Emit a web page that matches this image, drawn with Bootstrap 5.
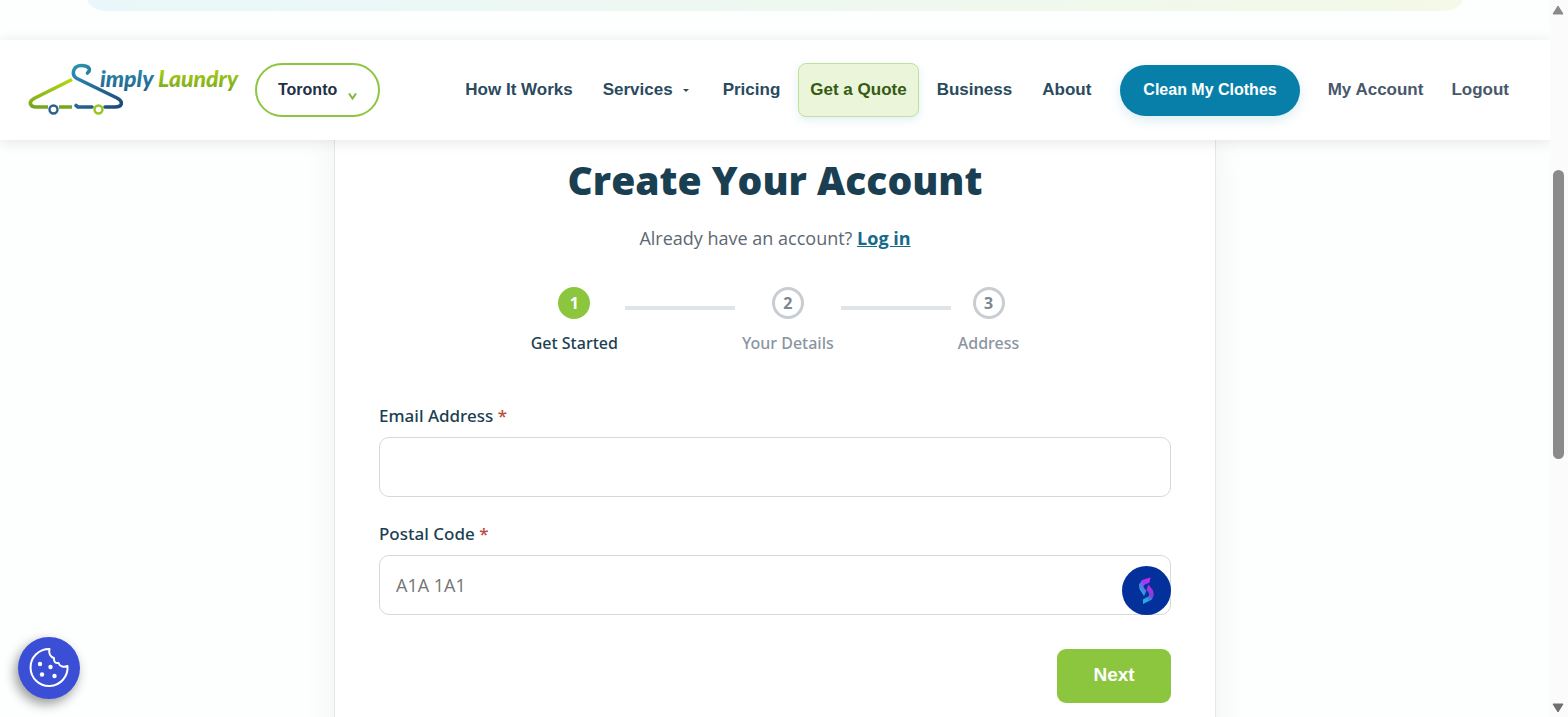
<!DOCTYPE html>
<html lang="en">
<head>
<meta charset="utf-8">
<meta name="viewport" content="width=device-width, initial-scale=1">
<title>Create Your Account - Simply Laundry</title>
<link href="https://cdn.jsdelivr.net/npm/bootstrap@5.3.0/dist/css/bootstrap.min.css" rel="stylesheet">
<style>
  body { background: #fdfefe; color: #1b3f52; font-family: "Open Sans", "Noto Sans", sans-serif; height: 100vh; overflow: hidden; }
  .page-area { min-width: 0; overflow: hidden; }
  .hero-foot { height: 11px; margin: 0 88px 29px; border-radius: 0 0 20px 20px / 0 0 11px 11px; background: linear-gradient(90deg, #e9f7fa, #f4f9e8); }

  .site-header { min-height: 100px; padding: 0 41px 0 28px; background: #fff; box-shadow: 0 2px 14px rgba(0, 0, 0, .1); z-index: 2; font-family: "Liberation Sans", Arial, sans-serif; font-size: 17px; font-weight: 700; }
  .brand-art { width: 212px; height: 56px; display: block; }
  .brand-word { font: italic 900 23px "Lato", sans-serif; }
  .city-btn { height: 54px; padding: 0 21px 0 21px; margin-left: 15px; border: 2px solid #8cc63f; border-radius: 27px; background: #fff; color: #1f2f46; font-size: 16px; font-weight: 700; }
  .city-btn svg { margin: 12px 0 0 11px; }
  .menu { gap: 6px; }
  .menu a, .account-link { color: #2a4a5e; text-decoration: none; white-space: nowrap; }
  .menu a { display: flex; align-items: center; height: 54px; padding: 0 11px; border: 1px solid transparent; border-radius: 8px; }
  .menu a.quote { background: #eaf5da; border-color: #c3e09a; color: #365a12; box-shadow: 0 3px 10px rgba(8, 127, 168, .12); }
  .menu .arrow { border: 3px solid transparent; border-top-color: currentColor; border-bottom: 0; margin-left: 10px; }
  .menu-end { gap: 28px; margin-left: 17px; }
  .account-link { color: #48586a; }
  .cta { height: 51px; padding: 0 23px; border: 0; border-radius: 26px; background: #087fa8; color: #fff; font-size: 16px; font-weight: 700; white-space: nowrap; box-shadow: 0 4px 12px rgba(8, 127, 168, .15); }

  .signup { max-width: 882px; padding: 16px 44px 0; background: #fff; border: solid #e3e8ea; border-width: 0 1px; box-shadow: 0 0 32px rgba(20, 60, 70, .06); }
  .signup h1 { font: 800 39px/48px "Open Sans", sans-serif; color: #1b3f52; margin: 0 0 21px; }
  .login-line { font-size: 18px; line-height: 26px; color: #5d6873; margin-bottom: 36px; }
  .login-line a { color: #17698a; font-weight: 700; }
  .steps { gap: 7px; margin: 0 0 48px; padding: 0; list-style: none; font-family: "Noto Sans", sans-serif; font-size: 16px; line-height: 24px; font-weight: 500; color: #8b959f; }
  .steps .dot { width: 32px; height: 32px; border: 3px solid #c8cdd2; border-radius: 50%; font-weight: 700; color: #7c8791; margin-bottom: 12px; }
  .steps .current { color: #1b3f52; }
  .steps .current .dot { background: #8cc63f; border-color: #8cc63f; color: #fff; }
  .steps .bar { width: 110px; height: 4px; margin-top: 19px; background: #dfe4e8; }
  .signup label { display: block; font-family: "Noto Sans", sans-serif; font-size: 17px; line-height: 26px; font-weight: 500; margin-bottom: 8px; }
  .signup label span { color: #c0483c; }
  .signup .form-control { height: 60px; padding: 0 16px; border: 1px solid #d5d9dc; border-radius: 10px; font-size: 18px; }
  .signup .form-control::placeholder { color: #757575; font-weight: 400; }
  .field { margin-bottom: 24px; }
  .helper { right: 0; bottom: 0; width: 49px; height: 49px; }
  .next-btn { width: 114px; height: 54px; padding: 0 0 3px; border: 0; border-radius: 9px; background: #8cc63f; color: #fff; font: 700 19px "Liberation Sans", Arial, sans-serif; margin-top: 10px; }
  .cookie-btn { left: 18px; bottom: 18px; width: 62px; height: 62px; border-radius: 50%; background: #3b4fd6; box-shadow: -3px 5px 12px rgba(0, 0, 0, .4); }

  .scroll-rail { width: 18px; background: #fbfbfb; padding: 5px 2px 4px 0; }
  .scroll-rail .thumb { width: 11px; height: 289px; border-radius: 6px; background: #8a8a8a; margin-top: 155px; }
</style>
</head>
<body class="d-flex">
<div class="page-area flex-grow-1">
  <div class="hero-foot"></div>

  <header class="site-header position-relative d-flex align-items-center">
    <a href="#" aria-label="Simply Laundry">
      <svg class="brand-art" viewBox="28 62 212 56" fill="none">
        <defs>
          <linearGradient id="lime" x1="0" y1="0" x2="0" y2="1"><stop offset="0" stop-color="#b4d90e"/><stop offset="1" stop-color="#75a521"/></linearGradient>
          <linearGradient id="sea" gradientUnits="userSpaceOnUse" x1="80" y1="64" x2="112" y2="110"><stop offset="0" stop-color="#2b8fb0"/><stop offset="1" stop-color="#1f4a80"/></linearGradient>
          <linearGradient id="seaWord" x1="0" y1="0" x2="0" y2="1"><stop offset="0" stop-color="#2a93b5"/><stop offset="1" stop-color="#23608b"/></linearGradient>
        </defs>
        <path d="M72 79.500 L34 98.500 C28 102 30 107 36 107 H48 M59 107 H72" stroke="url(#lime)" stroke-width="3.600"/>
        <path d="M87.500 73 C92 69 88 65.500 81.500 65.500 C72.500 65.500 71 75 77 78.500 L117 98 C124 102 122 107 115 107 H105 M92 107 H78 M78 107 L76 105.500" stroke="url(#sea)" stroke-width="3.600" stroke-linecap="round"/>
        <circle cx="53.500" cy="109.500" r="4" stroke="#2b5f91" stroke-width="2.400"/>
        <circle cx="98.500" cy="109.500" r="4" stroke="#98c51f" stroke-width="2.400"/>
        <text class="brand-word" x="100" y="87" fill="url(#seaWord)">imply</text>
        <text class="brand-word" x="158" y="87" fill="url(#lime)">Laundry</text>
      </svg>
    </a>
    <button type="button" class="city-btn d-flex align-items-center">Toronto
      <svg width="9" height="7" viewBox="0 0 9 7" fill="none" stroke="#7fb93a" stroke-width="2"><path d="M1 .500l3.500 5L8 .500"/></svg>
    </button>
    <nav class="d-flex align-items-center ms-auto">
      <ul class="menu list-unstyled d-flex align-items-center m-0">
        <li><a href="#">How It Works</a></li>
        <li><a href="#">Services<span class="arrow"></span></a></li>
        <li class="ms-1"><a href="#">Pricing</a></li>
        <li><a href="#" class="quote">Get a Quote</a></li>
        <li><a href="#">Business</a></li>
        <li><a href="#">About</a></li>
      </ul>
      <div class="menu-end d-flex align-items-center">
        <button type="button" class="cta">Clean My Clothes</button>
        <a href="#" class="account-link">My Account</a>
        <a href="#" class="account-link">Logout</a>
      </div>
    </nav>
  </header>

  <main class="signup mx-auto vh-100">
    <h1 class="text-center">Create Your Account</h1>
    <p class="login-line text-center">Already have an account? <a href="#">Log in</a></p>

    <ol class="steps d-flex justify-content-center">
      <li class="current d-flex flex-column align-items-center"><span class="dot d-flex align-items-center justify-content-center">1</span>Get Started</li>
      <li class="bar" aria-hidden="true"></li>
      <li class="d-flex flex-column align-items-center"><span class="dot d-flex align-items-center justify-content-center">2</span>Your Details</li>
      <li class="bar" aria-hidden="true"></li>
      <li class="d-flex flex-column align-items-center"><span class="dot d-flex align-items-center justify-content-center">3</span>Address</li>
    </ol>

    <form>
      <div class="field">
        <label for="email">Email Address <span>*</span></label>
        <input type="email" id="email" class="form-control">
      </div>
      <div class="field position-relative">
        <label for="postal">Postal Code <span>*</span></label>
        <input type="text" id="postal" class="form-control" placeholder="A1A 1A1">
        <svg class="helper position-absolute" viewBox="0 0 49 49" aria-hidden="true">
          <defs>
            <linearGradient id="pk" x1="1" y1="0" x2="0" y2="1"><stop offset="0" stop-color="#e020e8"/><stop offset=".45" stop-color="#9a3df0"/><stop offset=".8" stop-color="#18b4dc"/></linearGradient>
            <linearGradient id="cy" x1=".8" y1="0" x2=".2" y2="1"><stop offset="0" stop-color="#d81fe0"/><stop offset=".45" stop-color="#7a45d8"/><stop offset=".8" stop-color="#18b4dc"/></linearGradient>
          </defs>
          <circle cx="24.500" cy="24.500" r="24.500" fill="#03309a"/>
          <path d="M28.500 11.500 L27.500 16.500 L22 19 L21.500 21 L24.500 25 L22 30 L17.500 23 L17 18.500 L20 14 Z" fill="url(#pk)"/>
          <path d="M26.500 18.500 L31 24.500 L31.800 29 L30 33.500 L21 38 L21 33.500 L27 30 L27 27.500 L24.500 23.500 Z" fill="url(#cy)"/>
        </svg>
      </div>
      <div class="d-flex justify-content-end">
        <button type="button" class="next-btn">Next</button>
      </div>
    </form>
  </main>
</div>

<div class="scroll-rail d-flex flex-column align-items-center flex-shrink-0" aria-hidden="true">
  <svg width="12" height="10" viewBox="0 0 12 10"><path d="M6 1L11 9H1Z" fill="#8a8a8a" stroke="#8a8a8a" stroke-linejoin="round"/></svg>
  <div class="thumb"></div>
  <svg class="mt-auto" width="12" height="10" viewBox="0 0 12 10"><path d="M6 9L11 1H1Z" fill="#707070" stroke="#707070" stroke-linejoin="round"/></svg>
</div>

<button type="button" class="cookie-btn position-fixed border-0 p-0" aria-label="Cookie settings">
  <svg width="62" height="62" viewBox="0 0 62 62" fill="none" stroke="#fff" stroke-width="2" stroke-linejoin="round">
    <path d="M31.500 12 A18.500 18.500 0 1 0 49.500 29 C46 30.500 42 30 40.500 26 C37 26.500 35.500 24 36 21 C32 20 30.500 16 31.500 12 Z"/>
    <g fill="#fff" stroke="none"><circle cx="22" cy="27" r="2.200"/><circle cx="32.500" cy="30" r="2.200"/><circle cx="24" cy="37.500" r="2.200"/><circle cx="36.500" cy="39" r="2.200"/></g>
  </svg>
</button>
<script src="https://cdn.jsdelivr.net/npm/bootstrap@5.3.0/dist/js/bootstrap.bundle.min.js"></script>
</body>
</html>
